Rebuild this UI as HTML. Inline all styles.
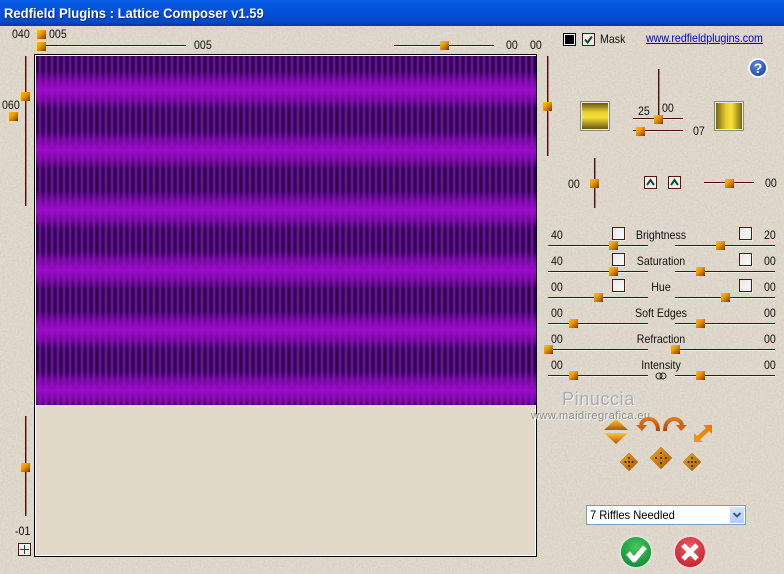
<!DOCTYPE html>
<html><head><meta charset="utf-8">
<style>
html,body{margin:0;padding:0}
body{width:784px;height:574px;overflow:hidden;position:relative;background:#e2dbcf;font-family:"Liberation Sans",sans-serif;font-size:12px;color:#111}
#noise{position:absolute;left:0;top:0;width:784px;height:574px}
#title{position:absolute;left:0;top:0;width:784px;height:26px;background:linear-gradient(#0a60e8 0,#0458de 12%,#0350d8 50%,#0248c8 85%,#0238a8 100%)}
#title span{position:absolute;left:4px;top:5px;color:#fff;font-weight:bold;font-size:14px;line-height:16px;white-space:nowrap;text-shadow:1px 1px 0 #02308c;transform:scaleX(.93);transform-origin:left center}
.t{position:absolute;white-space:nowrap;line-height:12px;height:12px;transform:scaleX(.885);transform-origin:left center}
.c{text-align:center;transform-origin:center center}
.h,.v{position:absolute;background:#4f0e08}
.h{height:1px;box-shadow:0 1px 0 rgba(255,255,255,.55)}
.v{width:1px;box-shadow:1px 0 0 rgba(90,20,16,.45)}
.k{position:absolute;width:9px;height:9px;background:linear-gradient(135deg,#ffc000 0,#f09800 40%,#a85800 80%,#703000 100%)}
.cb{position:absolute;width:11px;height:11px;border:1px solid #5a1410;background:linear-gradient(135deg,#e8e8e8,#fafafa);box-shadow:1px 1px 0 rgba(255,255,255,.5)}
#box{position:absolute;left:34px;top:54px;width:501px;height:501px;border:1px solid #000;box-shadow:inset 0 0 0 1px #fff;background:#e2d9c9}
#lat{position:absolute;left:36px;top:56px;width:500px;height:349px;background:
linear-gradient(180deg,rgba(154,12,200,0) 0,rgba(154,12,200,0) 15px,rgba(154,12,200,.6) 24px,#9a0cc8 34px,rgba(154,12,200,.6) 44px,rgba(154,12,200,0) 53px,rgba(154,12,200,0) 60px) 0 0/100% 60px repeat-y,
repeating-linear-gradient(90deg,#2e0448 0,#2e0448 2px,#641098 3px,#641098 5px,#2e0448 6px)}
.sw{position:absolute;top:101px;width:26px;height:26px;border:2px solid #f0ece4;outline:1px solid #8a8a80;outline-offset:-1px}
#sel{position:absolute;left:586px;top:505px;width:158px;height:18px;border:1px solid #7f9db9;background:#fff}
#sel span{position:absolute;left:3px;top:3px;font-size:12px;line-height:13px;color:#000;transform:scaleX(.93);transform-origin:left center;white-space:nowrap}
#sel i{position:absolute;right:1px;top:1px;width:14px;height:16px;background:linear-gradient(#d8e6fb,#b4ccf4);border:0}
svg{position:absolute;overflow:visible}
a{color:#0000d0}
</style></head><body>
<svg id="noise" width="784" height="574"><filter id="n"><feTurbulence type="fractalNoise" baseFrequency=".55" numOctaves="3" seed="4"/><feColorMatrix values="0 0 0 0 .42  0 0 0 0 .38  0 0 0 0 .30  .4 0 0 0 -.11"/></filter><rect width="784" height="574" filter="url(#n)"/></svg>
<div id="title"><span>Redfield Plugins : Lattice Composer v1.59</span></div>

<div class="t" style="left:12px;top:28px">040</div>
<div class="k" style="left:37px;top:30px"></div>
<div class="t" style="left:49px;top:28px">005</div>
<div class="h" style="left:37px;top:45px;width:149px"></div>
<div class="k" style="left:37px;top:42px"></div>
<div class="t" style="left:194px;top:39px">005</div>

<div class="v" style="left:25px;top:56px;height:150px"></div>
<div class="k" style="left:21px;top:92px"></div>
<div class="t" style="left:2px;top:99px">060</div>
<div class="k" style="left:9px;top:112px"></div>

<div class="h" style="left:394px;top:45px;width:100px"></div>
<div class="k" style="left:440px;top:41px"></div>
<div class="t" style="left:506px;top:39px">00</div>
<div class="t" style="left:530px;top:39px">00</div>

<div id="box"></div>
<div id="lat"></div>

<div class="v" style="left:25px;top:416px;height:100px"></div>
<div class="k" style="left:21px;top:463px"></div>
<div class="t" style="left:15px;top:525px">-01</div>
<svg style="left:18px;top:543px" width="13" height="13"><rect x=".5" y=".5" width="12" height="12" fill="#eee" stroke="#5a1410"/><path d="M6.5 2v9M2 6.5h9" stroke="#0c5030" stroke-width="1"/></svg>

<svg style="left:563px;top:33px" width="13" height="13"><rect width="13" height="13" fill="#000"/><rect x="1" y="1" width="11" height="11" fill="#fff"/><rect x="2" y="2" width="9" height="9" fill="#000"/></svg>
<svg style="left:582px;top:33px" width="13" height="13"><rect x=".5" y=".5" width="12" height="12" fill="#eee" stroke="#5a1410"/><path d="M3 6.5l2.5 3L10 3.5" fill="none" stroke="#0c5030" stroke-width="2"/></svg>
<div class="t" style="left:600px;top:33px">Mask</div>
<a class="t" style="left:646px;top:32px;text-decoration:underline">www.redfieldplugins.com</a>

<svg style="left:749px;top:59px" width="18" height="18" viewBox="0 0 18 18"><defs><radialGradient id="hb" cx=".4" cy=".3" r=".8"><stop offset="0" stop-color="#5a8ae0"/><stop offset="1" stop-color="#1644ac"/></radialGradient></defs><circle cx="9" cy="9" r="10" fill="#f4f6fc"/><circle cx="9" cy="9" r="8" fill="url(#hb)"/><text x="9" y="14" text-anchor="middle" fill="#fff" font-family="Liberation Sans" font-weight="bold" font-size="14">?</text></svg>

<div class="v" style="left:547px;top:56px;height:100px"></div>
<div class="k" style="left:543px;top:102px"></div>

<div class="sw" style="left:580px;background:linear-gradient(#6a5810,#e8d030 35%,#f8e038 55%,#6a5810)"></div>
<div class="sw" style="left:714px;background:linear-gradient(90deg,#7a6810,#e8d030 40%,#f8e038 60%,#7a6810)"></div>

<div class="v" style="left:658px;top:69px;height:50px"></div>
<div class="h" style="left:633px;top:118px;width:50px"></div>
<div class="k" style="left:654px;top:115px"></div>
<div class="t" style="left:638px;top:105px">25</div>
<div class="t" style="left:662px;top:102px">00</div>
<div class="h" style="left:633px;top:130px;width:50px"></div>
<div class="k" style="left:636px;top:127px"></div>
<div class="t" style="left:693px;top:125px">07</div>

<div class="t" style="left:568px;top:178px">00</div>
<div class="v" style="left:594px;top:158px;height:50px"></div>
<div class="k" style="left:590px;top:179px"></div>
<svg style="left:644px;top:176px" width="13" height="13"><rect x=".5" y=".5" width="12" height="12" fill="#eee" stroke="#5a1410"/><path d="M3 9l3.5-5L10 9" fill="none" stroke="#0c5030" stroke-width="2"/></svg>
<svg style="left:668px;top:176px" width="13" height="13"><rect x=".5" y=".5" width="12" height="12" fill="#eee" stroke="#5a1410"/><path d="M3 9l3.5-5L10 9" fill="none" stroke="#0c5030" stroke-width="2"/></svg>
<div class="h" style="left:704px;top:182px;width:50px"></div>
<div class="k" style="left:725px;top:179px"></div>
<div class="t" style="left:765px;top:177px">00</div>

<div class="h" style="left:548px;top:245px;width:100px"></div><div class="h" style="left:675px;top:245px;width:100px"></div>
<div class="h" style="left:548px;top:271px;width:100px"></div><div class="h" style="left:675px;top:271px;width:100px"></div>
<div class="h" style="left:548px;top:297px;width:100px"></div><div class="h" style="left:675px;top:297px;width:100px"></div>
<div class="h" style="left:548px;top:323px;width:100px"></div><div class="h" style="left:675px;top:323px;width:100px"></div>
<div class="h" style="left:548px;top:349px;width:100px"></div><div class="h" style="left:675px;top:349px;width:100px"></div>
<div class="h" style="left:548px;top:375px;width:100px"></div><div class="h" style="left:675px;top:375px;width:100px"></div>

<div class="k" style="left:609px;top:241px"></div><div class="k" style="left:716px;top:241px"></div>
<div class="k" style="left:609px;top:267px"></div><div class="k" style="left:696px;top:267px"></div>
<div class="k" style="left:594px;top:293px"></div><div class="k" style="left:721px;top:293px"></div>
<div class="k" style="left:569px;top:319px"></div><div class="k" style="left:696px;top:319px"></div>
<div class="k" style="left:544px;top:345px"></div><div class="k" style="left:671px;top:345px"></div>
<div class="k" style="left:569px;top:371px"></div><div class="k" style="left:696px;top:371px"></div>

<div class="cb" style="left:612px;top:227px"></div><div class="cb" style="left:739px;top:227px"></div>
<div class="cb" style="left:612px;top:253px"></div><div class="cb" style="left:739px;top:253px"></div>
<div class="cb" style="left:612px;top:279px"></div><div class="cb" style="left:739px;top:279px"></div>

<div class="t" style="left:551px;top:229px">40</div><div class="t" style="left:764px;top:229px">20</div>
<div class="t" style="left:551px;top:255px">40</div><div class="t" style="left:764px;top:255px">00</div>
<div class="t" style="left:551px;top:281px">00</div><div class="t" style="left:764px;top:281px">00</div>
<div class="t" style="left:551px;top:307px">00</div><div class="t" style="left:764px;top:307px">00</div>
<div class="t" style="left:551px;top:333px">00</div><div class="t" style="left:764px;top:333px">00</div>
<div class="t" style="left:551px;top:359px">00</div><div class="t" style="left:764px;top:359px">00</div>

<div class="t c" style="left:621px;width:80px;top:229px">Brightness</div>
<div class="t c" style="left:621px;width:80px;top:255px">Saturation</div>
<div class="t c" style="left:621px;width:80px;top:281px">Hue</div>
<div class="t c" style="left:621px;width:80px;top:307px">Soft Edges</div>
<div class="t c" style="left:621px;width:80px;top:333px">Refraction</div>
<div class="t c" style="left:621px;width:80px;top:359px">Intensity</div>
<svg style="left:655px;top:372px" width="12" height="8"><circle cx="4" cy="4" r="3" fill="none" stroke="#222"/><circle cx="8" cy="4" r="3" fill="none" stroke="#222"/></svg>

<div class="t" style="left:562px;top:390px;height:18px;line-height:18px;font-size:18px;letter-spacing:.6px;color:#a8acb8;text-shadow:1px 1px 0 #f4f2ee;transform:none">Pinuccia</div>
<div class="t" style="left:531px;top:410px;font-size:11px;letter-spacing:.42px;color:#8c9098;text-shadow:1px 1px 0 #f4f2ee;transform:none">www.maidiregrafica.eu</div>

<svg style="left:600px;top:414px" width="120" height="62" viewBox="0 0 120 62">
<defs>
<linearGradient id="g1" x1="0" y1="0" x2="0" y2="1"><stop offset="0" stop-color="#ffc828"/><stop offset="1" stop-color="#a85c08"/></linearGradient>
<linearGradient id="g2" x1="0" y1="0" x2="1" y2="1"><stop offset="0" stop-color="#f0a820"/><stop offset="1" stop-color="#a05808"/></linearGradient>
<linearGradient id="g3" x1="0" y1="0" x2="0" y2="1"><stop offset="0" stop-color="#e07818"/><stop offset="1" stop-color="#a04808"/></linearGradient>
<linearGradient id="g4" x1="0" y1="1" x2="1" y2="0"><stop offset="0" stop-color="#f09818"/><stop offset="1" stop-color="#e07c10"/></linearGradient>
</defs>
<path d="M4 16L16 5L28 16Z" fill="url(#g1)"/>
<path d="M4 19L28 19L16 30Z" fill="url(#g1)"/>
<path d="M58 17C58 8 53 5 49 5C45 5 42 7 41 11" fill="none" stroke="url(#g3)" stroke-width="4"/>
<path d="M36 11L47 11L42 17Z" fill="#d06410"/>
<path d="M65 17C65 8 70 5 74 5C78 5 81 7 82 11" fill="none" stroke="url(#g3)" stroke-width="4"/>
<path d="M87 11L76 11L81 17Z" fill="#d06410"/>
<path d="M103 11H112V20L109 17L100 26L103 28H94V19L97 22L106 14Z" fill="url(#g4)"/>
<path d="M29 39L38 48L29 57L20 48Z" fill="url(#g2)" stroke="#b06c14" stroke-width=".5"/>
<path d="M61 33L72 44L61 55L50 44Z" fill="url(#g2)" stroke="#b06c14" stroke-width=".5"/>
<path d="M92 39L101 48L92 57L83 48Z" fill="url(#g2)" stroke="#b06c14" stroke-width=".5"/>
<g fill="#3a1c04"><circle cx="29" cy="44" r="1"/><circle cx="25.500" cy="48" r="1"/><circle cx="29" cy="48" r="1"/><circle cx="32.500" cy="48" r="1"/><circle cx="29" cy="52" r="1"/>
<circle cx="61" cy="39" r="1"/><circle cx="56" cy="44" r="1"/><circle cx="61" cy="44" r="1"/><circle cx="66" cy="44" r="1"/><circle cx="61" cy="49" r="1"/>
<circle cx="92" cy="44" r="1"/><circle cx="88.500" cy="48" r="1"/><circle cx="92" cy="48" r="1"/><circle cx="95.500" cy="48" r="1"/><circle cx="92" cy="52" r="1"/></g>
</svg>

<div id="sel"><span>7 Riffles Needled</span><i></i></div>
<svg style="left:730px;top:507px" width="14" height="15"><path d="M3.500 6L7 9.500L10.500 6" fill="none" stroke="#3a5c94" stroke-width="2"/></svg>

<svg style="left:618px;top:534px" width="90" height="36" viewBox="0 0 90 36">
<defs>
<radialGradient id="gc" cx=".5" cy=".35" r=".7"><stop offset="0" stop-color="#4cc85c"/><stop offset="1" stop-color="#0c8a34"/></radialGradient>
<radialGradient id="rc" cx=".5" cy=".35" r=".7"><stop offset="0" stop-color="#ea5c68"/><stop offset="1" stop-color="#c4202c"/></radialGradient>
</defs>
<circle cx="18" cy="18" r="17" fill="#d8e4d8"/><circle cx="18" cy="18" r="15" fill="url(#gc)"/>
<path d="M10 19L16 26L27 13" fill="none" stroke="#fff" stroke-width="5" stroke-linejoin="round"/>
<circle cx="72" cy="18" r="17" fill="#ecd8d8"/><circle cx="72" cy="18" r="15" fill="url(#rc)"/>
<path d="M65 11L79 25M79 11L65 25" fill="none" stroke="#fff" stroke-width="5"/>
</svg>
</body></html>
